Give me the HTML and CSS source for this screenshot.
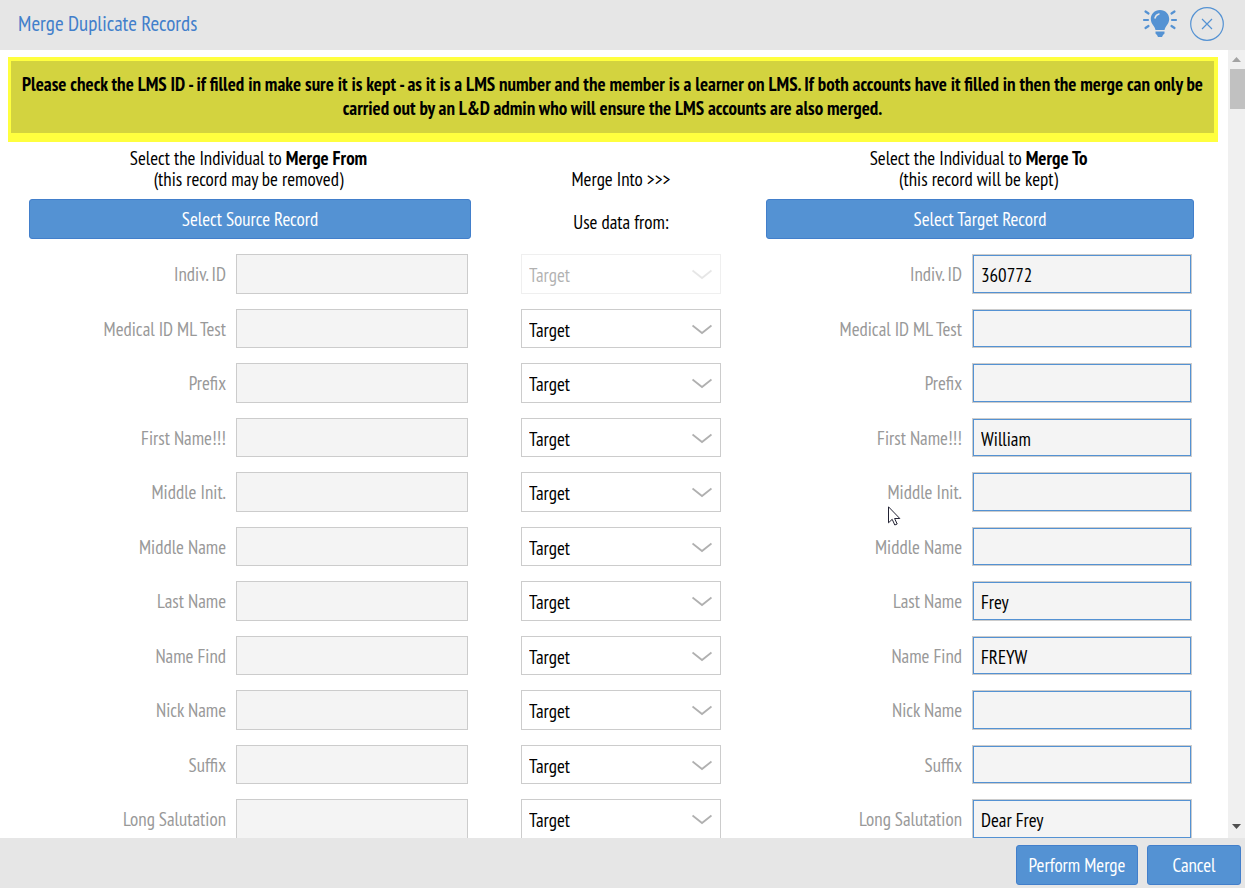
FILE: index.html
```html
<!DOCTYPE html>
<html lang="en">
<head>
<meta charset="utf-8">
<title>Merge Duplicate Records</title>
<link rel="stylesheet" href="styles.css">
</head>
<body>
<div class="dialog">
  <header class="titlebar">
    <h1 class="title">Merge Duplicate Records</h1>
    <div class="tools">
      <button class="tool" type="button" aria-label="Help">
        <svg width="36" height="30" viewBox="0 0 36 30" fill="none" stroke="#5492d3" stroke-width="2.200" stroke-linecap="round">
          <path d="M18 1C12.500 1 8.800 5 8.800 10c0 3 1.400 5 2.900 7 1 1.300 1.500 2.700 1.800 4h9c.3-1.300 .8-2.700 1.800-4 1.500-2 2.900-4 2.900-7 0-5-3.700-9-9.200-9z" fill="#5492d3" stroke="none"/>
          <path d="M13.500 22.500h9v2l-1.500 1.500-1 2h-4l-1-2-1.500-1.500z" fill="#5492d3" stroke="none"/>
          <path d="M13 9c.5-2 2-3.500 4-4" stroke="#e6e6e6" stroke-width="1.500"/>
          <path d="M2 11h4M30 11h4M3.500 2.500l3 2M32.500 2.500l-3 2M3.500 19l3-2M32.500 19l-3-2"/>
        </svg>
      </button>
      <button class="tool" type="button" aria-label="Close">
        <svg width="34" height="34" viewBox="0 0 34 34" fill="none" stroke="#5492d3" stroke-width="1.200">
          <circle cx="17" cy="17" r="16.300"/><path d="M12 12l10 10M22 12L12 22"/>
        </svg>
      </button>
    </div>
  </header>
  <div class="viewport">
    <main class="content">
      <p class="banner">Please check the LMS ID - if filled in make sure it is kept - as it is a LMS number and the member is a learner on LMS. If both accounts have it filled in then the merge can only be<br>carried out by an L&amp;D admin who will ensure the LMS accounts are also merged.</p>
      <form class="merge">
        <section class="side source">
          <p class="intro">Select the Individual to <b>Merge From</b><br>(this record may be removed)</p>
          <button class="btn" type="button">Select Source Record</button>
          <div class="fields">
            <label for="s1">Indiv. ID</label><input id="s1" readonly>
            <label for="s2">Medical ID ML Test</label><input id="s2" readonly>
            <label for="s3">Prefix</label><input id="s3" readonly>
            <label for="s4">First Name!!!</label><input id="s4" readonly>
            <label for="s5">Middle Init.</label><input id="s5" readonly>
            <label for="s6">Middle Name</label><input id="s6" readonly>
            <label for="s7">Last Name</label><input id="s7" readonly>
            <label for="s8">Name Find</label><input id="s8" readonly>
            <label for="s9">Nick Name</label><input id="s9" readonly>
            <label for="s10">Suffix</label><input id="s10" readonly>
            <label for="s11">Long Salutation</label><input id="s11" readonly>
          </div>
        </section>
        <section class="choice">
          <p class="into">Merge Into &gt;&gt;&gt;</p>
          <p class="use">Use data from:</p>
          <div class="fields">
            <select aria-label="Indiv. ID from" disabled><option>Target</option></select>
            <select aria-label="Medical ID ML Test from"><option>Target</option><option>Source</option></select>
            <select aria-label="Prefix from"><option>Target</option><option>Source</option></select>
            <select aria-label="First Name from"><option>Target</option><option>Source</option></select>
            <select aria-label="Middle Init. from"><option>Target</option><option>Source</option></select>
            <select aria-label="Middle Name from"><option>Target</option><option>Source</option></select>
            <select aria-label="Last Name from"><option>Target</option><option>Source</option></select>
            <select aria-label="Name Find from"><option>Target</option><option>Source</option></select>
            <select aria-label="Nick Name from"><option>Target</option><option>Source</option></select>
            <select aria-label="Suffix from"><option>Target</option><option>Source</option></select>
            <select aria-label="Long Salutation from"><option>Target</option><option>Source</option></select>
          </div>
        </section>
        <section class="side target">
          <p class="intro">Select the Individual to <b>Merge To</b><br>(this record will be kept)</p>
          <button class="btn" type="button">Select Target Record</button>
          <div class="fields">
            <label for="t1">Indiv. ID</label><input id="t1" value="360772" readonly>
            <label for="t2">Medical ID ML Test</label><input id="t2" readonly>
            <label for="t3">Prefix</label><input id="t3" readonly>
            <label for="t4">First Name!!!</label><input id="t4" value="William" readonly>
            <label for="t5">Middle Init.</label><input id="t5" readonly>
            <label for="t6">Middle Name</label><input id="t6" readonly>
            <label for="t7">Last Name</label><input id="t7" value="Frey" readonly>
            <label for="t8">Name Find</label><input id="t8" value="FREYW" readonly>
            <label for="t9">Nick Name</label><input id="t9" readonly>
            <label for="t10">Suffix</label><input id="t10" readonly>
            <label for="t11">Long Salutation</label><input id="t11" value="Dear Frey" readonly>
          </div>
        </section>
      </form>
    </main>
    <div class="scrollbar" aria-hidden="true">
      <svg width="17" height="17" viewBox="0 0 17 17"><path d="M4 12h9L8.500 7z" fill="#a3a3a3"/></svg>
      <div class="thumb"></div>
      <svg class="down" width="17" height="17" viewBox="0 0 17 17"><path d="M4 3h9L8.500 8z" fill="#505050"/></svg>
    </div>
  </div>
  <footer class="actions">
    <button class="btn perform" type="button">Perform Merge</button>
    <button class="btn cancel" type="button">Cancel</button>
  </footer>
  <svg class="pointer" width="13" height="20" viewBox="0 0 13 20"><path d="M.5 .8v16l3.700-3.500 2.600 5.700 2.400-1-2.600-5.500h5.200z" fill="#fff" stroke="#222233"/></svg>
</div>
</body>
</html>
```
FILE: styles.css
```css
* { box-sizing: border-box; }
body, button, input, select {
  font-family: "PT Sans Narrow", "Liberation Sans Narrow", Lato, sans-serif;
  font-size: 19px;
}
body { margin: 0; color: #000; }
p, h1 { margin: 0; }

.dialog {
  position: relative;
  display: flex;
  flex-direction: column;
  height: 100vh;
  background: #fff;
}

.titlebar {
  display: flex;
  flex: none;
  align-items: center;
  justify-content: space-between;
  height: 50px;
  padding: 0 21px 3px 18px;
  background: #e6e6e6;
}
.title { font-size: 21px; font-weight: 400; color: #427fcb; }
.tools { display: flex; align-items: center; gap: 12px; }
.tool { display: flex; padding: 0; border: 0; background: none; }

.viewport { display: flex; flex: 1; min-height: 0; }
.content { flex: 1; padding: 7px 0 0; overflow-y: auto; scrollbar-width: none; }

.banner {
  margin: 0 10px 0 8px;
  padding: 11px 0 13px;
  border: solid #ffff3f;
  border-width: 4px 4px 9px 3px;
  background: #d3d33f;
  font-weight: 700;
  line-height: 24px;
  text-align: center;
}

.merge {
  display: grid;
  grid-template-columns: 442fr 295px 428fr;
  padding: 6px 34px 15px 29px;
  text-align: center;
}
.intro { margin-bottom: 9px; padding-right: 3px; line-height: 21px; }
.btn {
  height: 40px;
  padding: 0;
  border: 1px solid #427fcb;
  border-radius: 3px;
  background: #5492d3;
  color: #fff;
}
.side .btn { width: 100%; }

.fields {
  display: grid;
  grid-auto-rows: 40px 39px;
  row-gap: 15px;
  column-gap: 10px;
  align-items: center;
  margin-top: 15px;
}
.source .fields { grid-template-columns: 1fr 232px; padding-right: 3px; }
.target .fields { grid-template-columns: 1fr 220px; padding-right: 2px; }
.fields label { color: #999; text-align: right; }
.fields input {
  width: 100%;
  height: 100%;
  padding: 2px 8px 0;
  border: 1px solid #ccc;
  border-radius: 0;
  outline: 0;
  background: #f4f4f4;
  color: #000;
}
.target input { box-shadow: inset 0 0 0 1px #5492d3; }

.choice { padding: 0 45px 0 50px; }
.into { padding-top: 21px; line-height: 21px; }
.use { padding: 22px 0 6px; line-height: 21px; }
.fields select {
  width: 100%;
  height: 100%;
  padding: 2px 30px 0 7px;
  border: 1px solid #ccc;
  border-radius: 0;
  appearance: none;
  background: #fff url("data:image/svg+xml,%3Csvg xmlns='http://www.w3.org/2000/svg' width='20' height='12'%3E%3Cpath d='M.5 2.500l9.500 7.500 9.500-7.500' fill='none' stroke='%23b0b0b0' stroke-width='1.800'/%3E%3C/svg%3E") no-repeat right 8px center;
  color: #000;
}
.fields select:disabled { opacity: .3; }

.scrollbar { display: flex; flex: none; flex-direction: column; width: 17px; background: #f0f0f0; }
.thumb { height: 40px; margin: 2px 0 0 2px; background: #c1c1c1; }
.down { margin-top: auto; }

.actions {
  display: flex;
  flex: none;
  align-items: center;
  justify-content: flex-end;
  gap: 9px;
  height: 50px;
  padding: 4px 4px 0 0;
  background: #e6e6e6;
}
.perform { width: 122px; }
.cancel { width: 94px; }

.pointer { position: absolute; left: 888px; top: 506px; }
```
